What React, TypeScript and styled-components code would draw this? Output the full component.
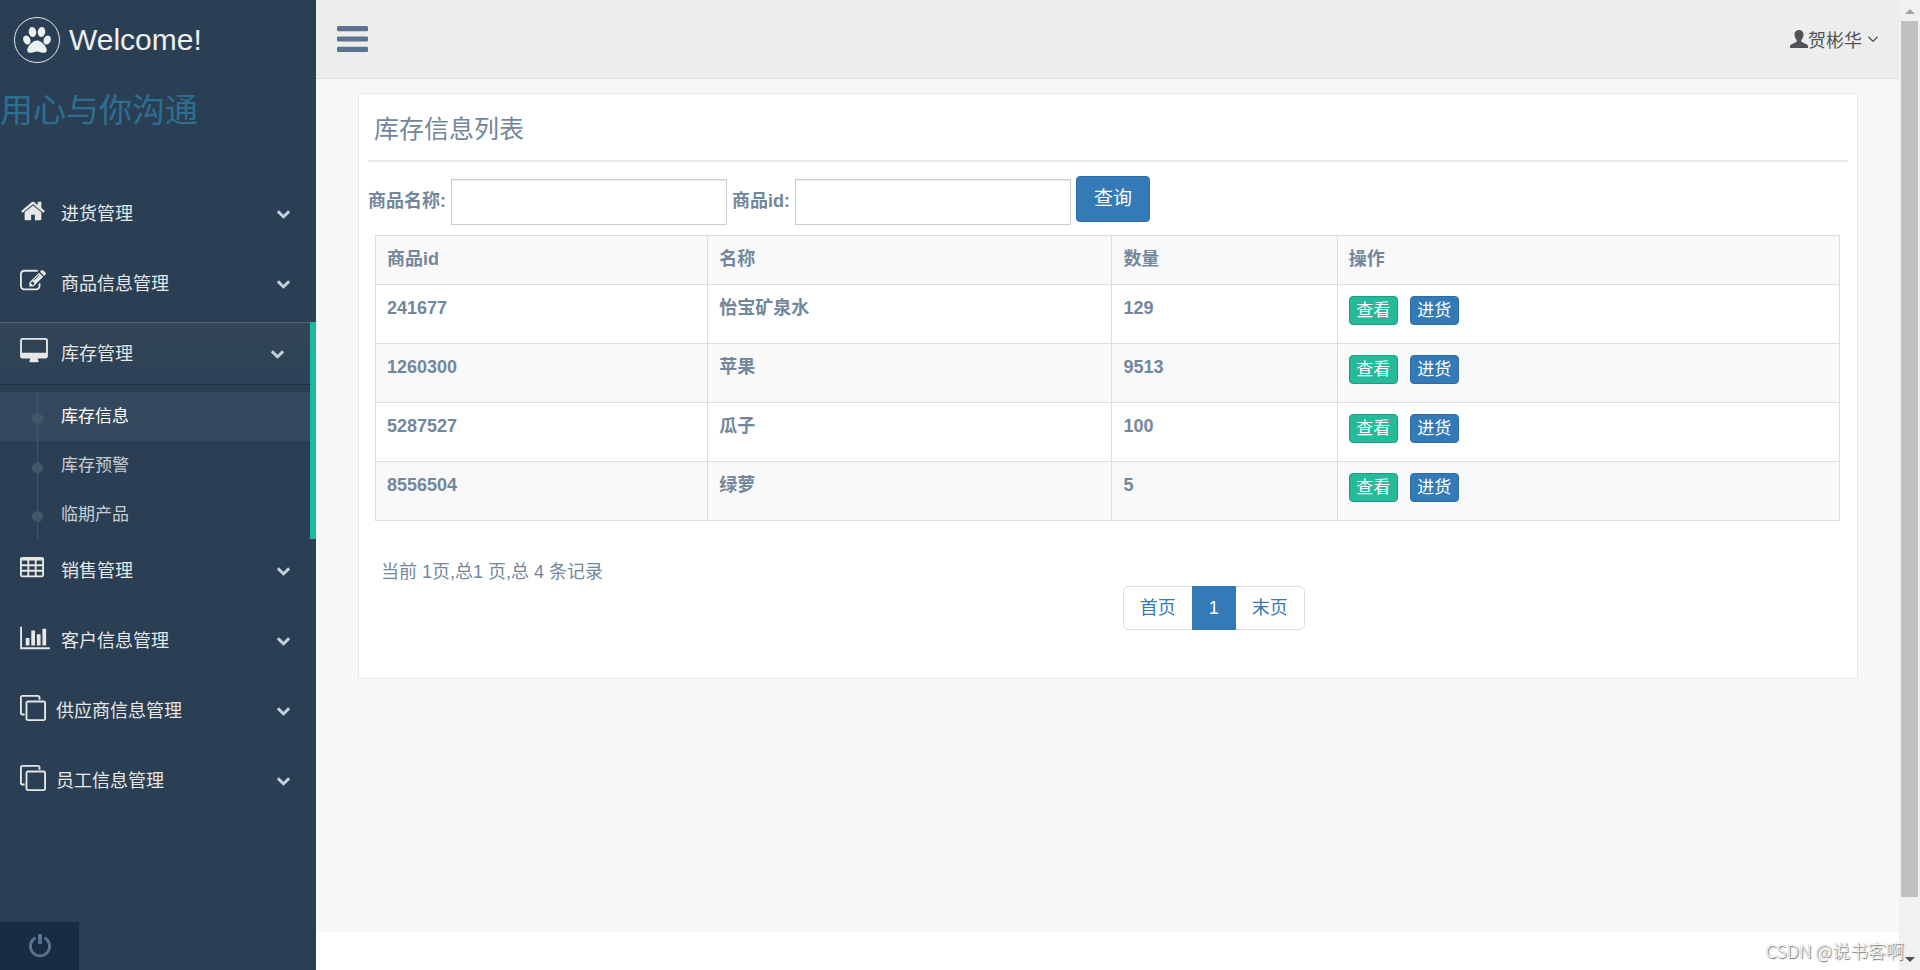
import React from 'react';
import styled, { createGlobalStyle, css } from 'styled-components';

const GlobalStyle = createGlobalStyle`
  *, *::before, *::after { box-sizing: border-box; }
  body {
    margin: 0;
    background: #fff;
    color: #73879c;
    font-family: "Liberation Sans", "Noto Sans CJK SC", sans-serif;
    font-size: 18px;
    line-height: 26px;
  }
  button, input { font: inherit; }
  a { color: inherit; text-decoration: none; }
`;

/* ---------- icons ---------- */

const Svg = styled.svg`
  display: block;
  flex: none;
  fill: currentColor;
`;

type IconProps = { box: string; w: number; h: number; d: string };
const Icon = ({ box, w, h, d }: IconProps) => (
  <Svg viewBox={box} width={w} height={h} aria-hidden="true">
    <path d={d} fillRule="evenodd" />
  </Svg>
);

const cell = (x: number, y: number) =>
  `M${x + 384} ${y + 224}v-192q0-14-9-23t-23-9h-320q-14 0-23 9t-9 23v192q0 14 9 23t23 9h320q14 0 23-9t9-23z`;
const cells = [384, 768, 1152].flatMap((y) => [128, 640, 1216].map((x) => cell(x + (x < 1216 ? 64 : 0), y))).join('');

const icons: Record<string, IconProps> = {
  home: {
    box: '0 0 1792 1792', w: 26, h: 26,
    d: 'M1472 992v480q0 26-19 45t-45 19h-384v-384h-256v384h-384q-26 0-45-19t-19-45v-480q0-1 .5-3t.5-3l575-474 575 474q1 2 1 6zm223-69l-62 74q-8 9-21 11h-3q-13 0-21-7l-692-577-692 577q-12 8-24 7-13-2-21-11l-62-74q-8-10-7-23.5t11-21.5l719-599q32-26 76-26t76 26l244 204v-195q0-14 9-23t23-9h192q14 0 23 9t9 23v408l219 182q10 8 11 21.5t-7 23.5z',
  },
  edit: {
    box: '0 0 1792 1792', w: 26, h: 26,
    d: 'M888 1184l116-116-152-152-116 116v56h96v96h56zm440-720q-16-16-33 1l-350 350q-17 17-1 33t33-1l350-350q17-17 1-33zm80 594v190q0 119-84.5 203.5t-203.5 84.5h-832q-119 0-203.5-84.5t-84.5-203.5v-832q0-119 84.5-203.5t203.5-84.5h832q63 0 117 25 15 7 18 23 3 17-9 29l-49 49q-14 14-32 8-23-6-45-6h-832q-66 0-113 47t-47 113v832q0 66 47 113t113 47h832q66 0 113-47t47-113v-126q0-13 9-22l64-64q15-15 35-7t20 29zm-96-738l288 288-672 672h-288v-288zm444 132l-92 92-288-288 92-92q28-28 68-28t68 28l152 152q28 28 28 68t-28 68z',
  },
  desktop: {
    box: '-64 0 1920 1792', w: 28, h: 26,
    d: 'M1728 992v-832q0-13-9.5-22.5t-22.5-9.5h-1600q-13 0-22.5 9.5t-9.5 22.5v832q0 13 9.5 22.5t22.5 9.5h1600q13 0 22.5-9.5t9.5-22.5zm128-832v1088q0 66-47 113t-113 47h-544q0 37 16 77.5t32 71 16 43.5q0 26-19 45t-45 19h-512q-26 0-45-19t-19-45q0-14 16-44t32-70 16-78h-544q-66 0-113-47t-47-113v-1088q0-66 47-113t113-47h1600q66 0 113 47t47 113z',
  },
  table: {
    box: '64 0 1664 1792', w: 24, h: 26,
    d: `${cells}M1728 288v1088q0 66-47 113t-113 47h-1344q-66 0-113-47t-47-113v-1088q0-66 47-113t113-47h1344q66 0 113 47t47 113z`,
  },
  chart: {
    box: '0 0 2048 1792', w: 30, h: 26,
    d: 'M640 896v512h-256v-512h256zm384-512v1024h-256v-1024h256zm1024 1152v128h-2048v-1536h128v1408h1920zm-640-896v768h-256v-768h256zm384-384v1152h-256v-1152h256z',
  },
  clone: {
    box: '0 0 1792 1792', w: 26, h: 26,
    d: 'M1664 1632v-1088q0-13-9.5-22.5t-22.5-9.5h-1088q-13 0-22.5 9.5t-9.5 22.5v1088q0 13 9.5 22.5t22.5 9.5h1088q13 0 22.5-9.5t9.5-22.5zm128-1088v1088q0 66-47 113t-113 47h-1088q-66 0-113-47t-47-113v-1088q0-66 47-113t113-47h1088q66 0 113 47t47 113zm-384-384v160h-128v-160q0-13-9.5-22.5t-22.5-9.5h-1088q-13 0-22.5 9.5t-9.5 22.5v1088q0 13 9.5 22.5t22.5 9.5h160v128h-160q-66 0-113-47t-47-113v-1088q0-66 47-113t113-47h1088q66 0 113 47t47 113z',
  },
  chevron: {
    box: '90 512 1612 1056', w: 13, h: 9,
    d: 'M1683 808l-742 741q-19 19-45 19t-45-19l-742-741q-19-19-19-45.5t19-45.5l166-165q19-19 45-19t45 19l531 531 531-531q19-19 45-19t45 19l166 165q19 19 19 45.5t-19 45.5z',
  },
  bars: {
    box: '128 256 1536 1280', w: 31, h: 26,
    d: 'M1664 1344v128q0 64-64 64h-1408q-64 0-64-64v-128q0-64 64-64h1408q64 0 64 64zm0-512v128q0 64-64 64h-1408q-64 0-64-64v-128q0-64 64-64h1408q64 0 64 64zm0-512v128q0 64-64 64h-1408q-64 0-64-64v-128q0-64 64-64h1408q64 0 64 64z',
  },
  angle: {
    box: '384 640 1024 640', w: 10, h: 7,
    d: 'M1395 736q0 13-10 23l-466 466q-10 10-23 10t-23-10l-466-466q-10-10-10-23t10-23l50-50q10-10 23-10t23 10l393 393 393-393q10-10 23-10t23 10l50 50q10 10 10 23z',
  },
  user: {
    box: '0 0 18 18', w: 18, h: 18,
    d: 'M9 0C6.300 0 4.500 1.800 4.500 4.700c0 1.800.8 3.600 1.800 4.700.7.800.8 1.900-.1 2.600L1.500 14.300C.4 14.900 0 15.500 0 16.500V18h18v-1.500c0-1-.4-1.600-1.500-2.200L11.800 12c-.9-.7-.8-1.800-.1-2.600 1-1.100 1.800-2.900 1.800-4.700C13.500 1.800 11.700 0 9 0z',
  },
};

const Paw = () => (
  <Svg viewBox="0 0 28 26" width="28" height="26" aria-hidden="true">
    <ellipse cx="9.500" cy="5" rx="3.700" ry="5" transform="rotate(-10 9.500 5)" />
    <ellipse cx="18.500" cy="5" rx="3.700" ry="5" transform="rotate(10 18.500 5)" />
    <ellipse cx="3.800" cy="13" rx="3.500" ry="4.700" transform="rotate(-22 3.800 13)" />
    <ellipse cx="24.200" cy="13" rx="3.500" ry="4.700" transform="rotate(22 24.200 13)" />
    <path d="M14 13.500c4.500 0 9.800 6.200 9.800 9.800 0 1.900-1.400 2.500-3 2.500-2.600 0-4.500-1.400-6.800-1.400s-4.200 1.400-6.800 1.400c-1.600 0-3-.6-3-2.500 0-3.600 5.300-9.800 9.800-9.800z" />
  </Svg>
);

const Power = () => (
  <Svg viewBox="0 0 24 24" width="24" height="24" aria-hidden="true">
    <path d="M7.500 3.700A9.600 9.600 0 1 0 16.500 3.700" fill="none" stroke="currentColor" strokeWidth="2.800" />
    <rect x="10" y="0" width="4" height="10" rx="1" />
  </Svg>
);

/* ---------- page frame ---------- */

const Page = styled.div`
  display: flex;
  min-height: 100vh;
`;

const Sidebar = styled.aside`
  display: flex;
  flex-direction: column;
  flex: none;
  width: 316px;
  background: #2a3f54;
  color: #e7e7e7;
`;

const Brand = styled.a`
  display: flex;
  align-items: center;
  gap: 9px;
  height: 80px;
  padding-left: 14px;
  color: #ecf0f1;
  font-size: 30px;
`;

const BrandMark = styled.span`
  display: flex;
  align-items: center;
  justify-content: center;
  width: 46px;
  height: 46px;
  border: 1px solid #eaeaea;
  border-radius: 50%;
`;

const Slogan = styled.h2`
  margin: 0 0 40px;
  color: #2d6f91;
  font-size: 33px;
  font-weight: 400;
  line-height: 62px;
`;

const Menu = styled.ul`
  margin: 0;
  padding: 0;
  list-style: none;
`;

const MenuItem = styled.li<{ $open?: boolean }>`
  ${(p) => p.$open && css`border-right: 6px solid #1abb9c;`}
`;

const MenuLink = styled.a<{ $open?: boolean }>`
  display: flex;
  height: 62px;
  margin-bottom: 8px;
  padding: 16px 26px 0 20px;
  ${(p) => p.$open && css`
    background: linear-gradient(#334556, #2c4257);
    box-shadow: rgba(0, 0, 0, 0.25) 0 1px 0, inset rgba(255, 255, 255, 0.16) 0 1px 0;
    text-shadow: rgba(0, 0, 0, 0.25) 0 -1px 0;
  `}
`;

const MenuIcon = styled.span<{ $narrow?: boolean }>`
  flex: none;
  width: ${(p) => (p.$narrow ? 36 : 41)}px;
`;

const MenuLabel = styled.span`
  flex: 1;
  line-height: 32px;
`;

const MenuArrow = styled.span`
  padding-top: 12px;
  color: #c4cfda;
`;

const SubMenu = styled.ul`
  margin: 0;
  padding: 0;
  list-style: none;
`;

const SubItem = styled.li<{ $current?: boolean }>`
  position: relative;
  height: 49px;
  padding-left: 61px;
  background: ${(p) => (p.$current ? '#34495e' : 'transparent')};
  color: ${(p) => (p.$current ? '#fff' : '#c8ced4')};
  font-size: 17px;
  line-height: 49px;

  &::before {
    content: "";
    position: absolute;
    top: 0;
    bottom: 0;
    left: 37px;
    border-left: 1px solid #425668;
  }

  &::after {
    content: "";
    position: absolute;
    top: 21px;
    left: 32px;
    width: 11px;
    height: 11px;
    border-radius: 50%;
    background: #425668;
  }
`;

const SidebarFooter = styled.div`
  margin-top: auto;
`;

const PowerButton = styled.button`
  display: flex;
  align-items: center;
  justify-content: center;
  width: 79px;
  height: 48px;
  padding: 0;
  border: 0;
  background: #172d44;
  color: #5a738e;
`;

const Main = styled.div`
  display: flex;
  flex: 1;
  flex-direction: column;
  min-width: 0;
`;

const TopBar = styled.header`
  display: flex;
  align-items: center;
  justify-content: space-between;
  height: 79px;
  padding: 0 21px;
  border-bottom: 1px solid #d9dee4;
  background: #ededed;
`;

const PlainButton = styled.button`
  display: flex;
  align-items: center;
  padding: 0;
  border: 0;
  background: none;
  color: #5a738e;
`;

const UserMenu = styled(PlainButton)`
  color: #515356;
  line-height: 30px;
  svg:last-child { margin-left: 6px; }
`;

const UserName = styled.span`
  padding-top: 3px;
`;

const Content = styled.main`
  flex: 1;
  padding: 14px 41px 0 42px;
  background: #f7f7f7;
`;

const PageFooter = styled.footer`
  height: 38px;
  background: #fff;
`;

/* ---------- panel ---------- */

const Panel = styled.section`
  padding: 8px 9px 47px;
  border: 1px solid #e6e9ed;
  background: #fff;
`;

const PanelTitle = styled.h2`
  margin: 0 0 14px;
  padding: 0 6px 4px;
  border-bottom: 2px solid #e6e9ed;
  font-size: 25px;
  font-weight: 400;
  line-height: 54px;
`;

const SearchForm = styled.form`
  display: flex;
  align-items: flex-start;
  gap: 5px;
  height: 59px;
`;

const SearchLabel = styled.label`
  font-weight: 700;
  line-height: 50px;
`;

const SearchInput = styled.input`
  width: 276px;
  height: 46px;
  margin-top: 3px;
  padding: 6px 12px;
  border: 1px solid #ccc;
  box-shadow: inset 0 1px 1px rgba(0, 0, 0, 0.075);
`;

const SearchButton = styled.button`
  width: 74px;
  height: 46px;
  padding: 0;
  border: 1px solid #2e6da4;
  border-radius: 4px;
  background: #337ab7;
  color: #fff;
  font-size: 19px;
`;

const Table = styled.table`
  width: calc(100% - 15px);
  margin: 0 8px 0 7px;
  border-collapse: collapse;
  table-layout: fixed;
  font-weight: 700;
  line-height: 24px;

  th, td {
    padding: 11px;
    border: 1px solid #ddd;
    text-align: left;
    vertical-align: top;
  }
  th:nth-child(1) { width: 22.7%; }
  th:nth-child(2) { width: 27.6%; }
  th:nth-child(3) { width: 15.4%; }
  tr { height: 59px; }
  thead tr { height: 49px; }
  thead tr, tbody tr:nth-child(even) { background: #f9f9f9; }
`;

const Actions = styled.div`
  display: flex;
  gap: 12px;
`;

const ActionButton = styled.button<{ $tone: 'view' | 'stock' }>`
  width: 49px;
  height: 29px;
  padding: 0;
  border: 1px solid ${(p) => (p.$tone === 'view' ? '#169f85' : '#2e6da4')};
  border-radius: 4px;
  background: ${(p) => (p.$tone === 'view' ? '#26b99a' : '#337ab7')};
  color: #fff;
  font-size: 17px;
  font-weight: 400;
  line-height: 25px;
`;

const Summary = styled.p`
  margin: 37px 13px 0;
  line-height: 28px;
`;

const Pager = styled.nav`
  display: flex;
  width: max-content;
  margin: 0 0 1px 51%;
  border: 1px solid #ddd;
  border-radius: 5px;
`;

const PagerLink = styled.a<{ $current?: boolean }>`
  margin: -1px 0;
  padding: 0 ${(p) => (p.$current ? 17 : 16)}px;
  color: ${(p) => (p.$current ? '#fff' : '#337ab7')};
  background: ${(p) => (p.$current ? '#337ab7' : 'none')};
  line-height: 44px;
`;

/* ---------- scroll bar and watermark ---------- */

const ScrollTrack = styled.div`
  display: flex;
  flex: none;
  flex-direction: column;
  align-items: center;
  justify-content: space-between;
  width: 21px;
  padding: 9px 2px 8px;
  background: #f1f1f1;
`;

const ScrollThumb = styled.div`
  flex: 1;
  width: 17px;
  margin: 7px 0 60px;
  background: #c1c1c1;
`;

const ScrollArrow = styled.span<{ $down?: boolean }>`
  border: solid transparent;
  border-width: ${(p) => (p.$down ? '5px 5px 0' : '0 5px 5px')};
  ${(p) => (p.$down ? 'border-top-color: #505050;' : 'border-bottom-color: #a3a3a3;')}
`;

const Watermark = styled.div`
  position: absolute;
  right: 16px;
  bottom: 7px;
  color: #fff;
  font-family: "Noto Sans CJK SC", sans-serif;
  font-weight: 300;
  text-shadow: 1px 1px 1px #666, 0 0 1px #999;
`;

const menu = [
  { icon: 'home', label: '进货管理' },
  { icon: 'edit', label: '商品信息管理' },
  { icon: 'desktop', label: '库存管理', children: ['库存信息', '库存预警', '临期产品'] },
  { icon: 'table', label: '销售管理' },
  { icon: 'chart', label: '客户信息管理' },
  { icon: 'clone', label: '供应商信息管理' },
  { icon: 'clone', label: '员工信息管理' },
];

const stock = [
  ['241677', '怡宝矿泉水', '129'],
  ['1260300', '苹果', '9513'],
  ['5287527', '瓜子', '100'],
  ['8556504', '绿萝', '5'],
];

export default function App() {
  return (
    <>
      <GlobalStyle />
      <Page>
        <Sidebar>
          <Brand href="#">
            <BrandMark><Paw /></BrandMark>
            Welcome!
          </Brand>
          <Slogan>用心与你沟通</Slogan>
          <Menu>
            {menu.map((item) => (
              <MenuItem key={item.label} $open={!!item.children}>
                <MenuLink href="#" $open={!!item.children}>
                  <MenuIcon $narrow={item.icon === 'clone'}><Icon {...icons[item.icon]} /></MenuIcon>
                  <MenuLabel>{item.label}</MenuLabel>
                  <MenuArrow><Icon {...icons.chevron} /></MenuArrow>
                </MenuLink>
                {item.children && (
                  <SubMenu>
                    {item.children.map((child, i) => (
                      <SubItem key={child} $current={i === 0}><a href="#">{child}</a></SubItem>
                    ))}
                  </SubMenu>
                )}
              </MenuItem>
            ))}
          </Menu>
          <SidebarFooter>
            <PowerButton aria-label="退出"><Power /></PowerButton>
          </SidebarFooter>
        </Sidebar>

        <Main>
          <TopBar>
            <PlainButton aria-label="菜单"><Icon {...icons.bars} /></PlainButton>
            <UserMenu>
              <Icon {...icons.user} /><UserName>贺彬华</UserName><Icon {...icons.angle} />
            </UserMenu>
          </TopBar>
          <Content>
            <Panel>
              <PanelTitle>库存信息列表</PanelTitle>
              <SearchForm>
                <SearchLabel htmlFor="name">商品名称:</SearchLabel>
                <SearchInput id="name" type="text" />
                <SearchLabel htmlFor="id">商品id:</SearchLabel>
                <SearchInput id="id" type="text" />
                <SearchButton type="button">查询</SearchButton>
              </SearchForm>
              <Table>
                <thead>
                  <tr><th>商品id</th><th>名称</th><th>数量</th><th>操作</th></tr>
                </thead>
                <tbody>
                  {stock.map(([id, name, count]) => (
                    <tr key={id}>
                      <td>{id}</td>
                      <td>{name}</td>
                      <td>{count}</td>
                      <td>
                        <Actions>
                          <ActionButton $tone="view">查看</ActionButton>
                          <ActionButton $tone="stock">进货</ActionButton>
                        </Actions>
                      </td>
                    </tr>
                  ))}
                </tbody>
              </Table>
              <Summary>当前 1页,总1 页,总 4 条记录</Summary>
              <Pager>
                <PagerLink href="#">首页</PagerLink>
                <PagerLink href="#" $current>1</PagerLink>
                <PagerLink href="#">末页</PagerLink>
              </Pager>
            </Panel>
          </Content>
          <PageFooter />
        </Main>

        <ScrollTrack aria-hidden="true">
          <ScrollArrow />
          <ScrollThumb />
          <ScrollArrow $down />
        </ScrollTrack>
      </Page>
      <Watermark>CSDN @说书客啊</Watermark>
    </>
  );
}
